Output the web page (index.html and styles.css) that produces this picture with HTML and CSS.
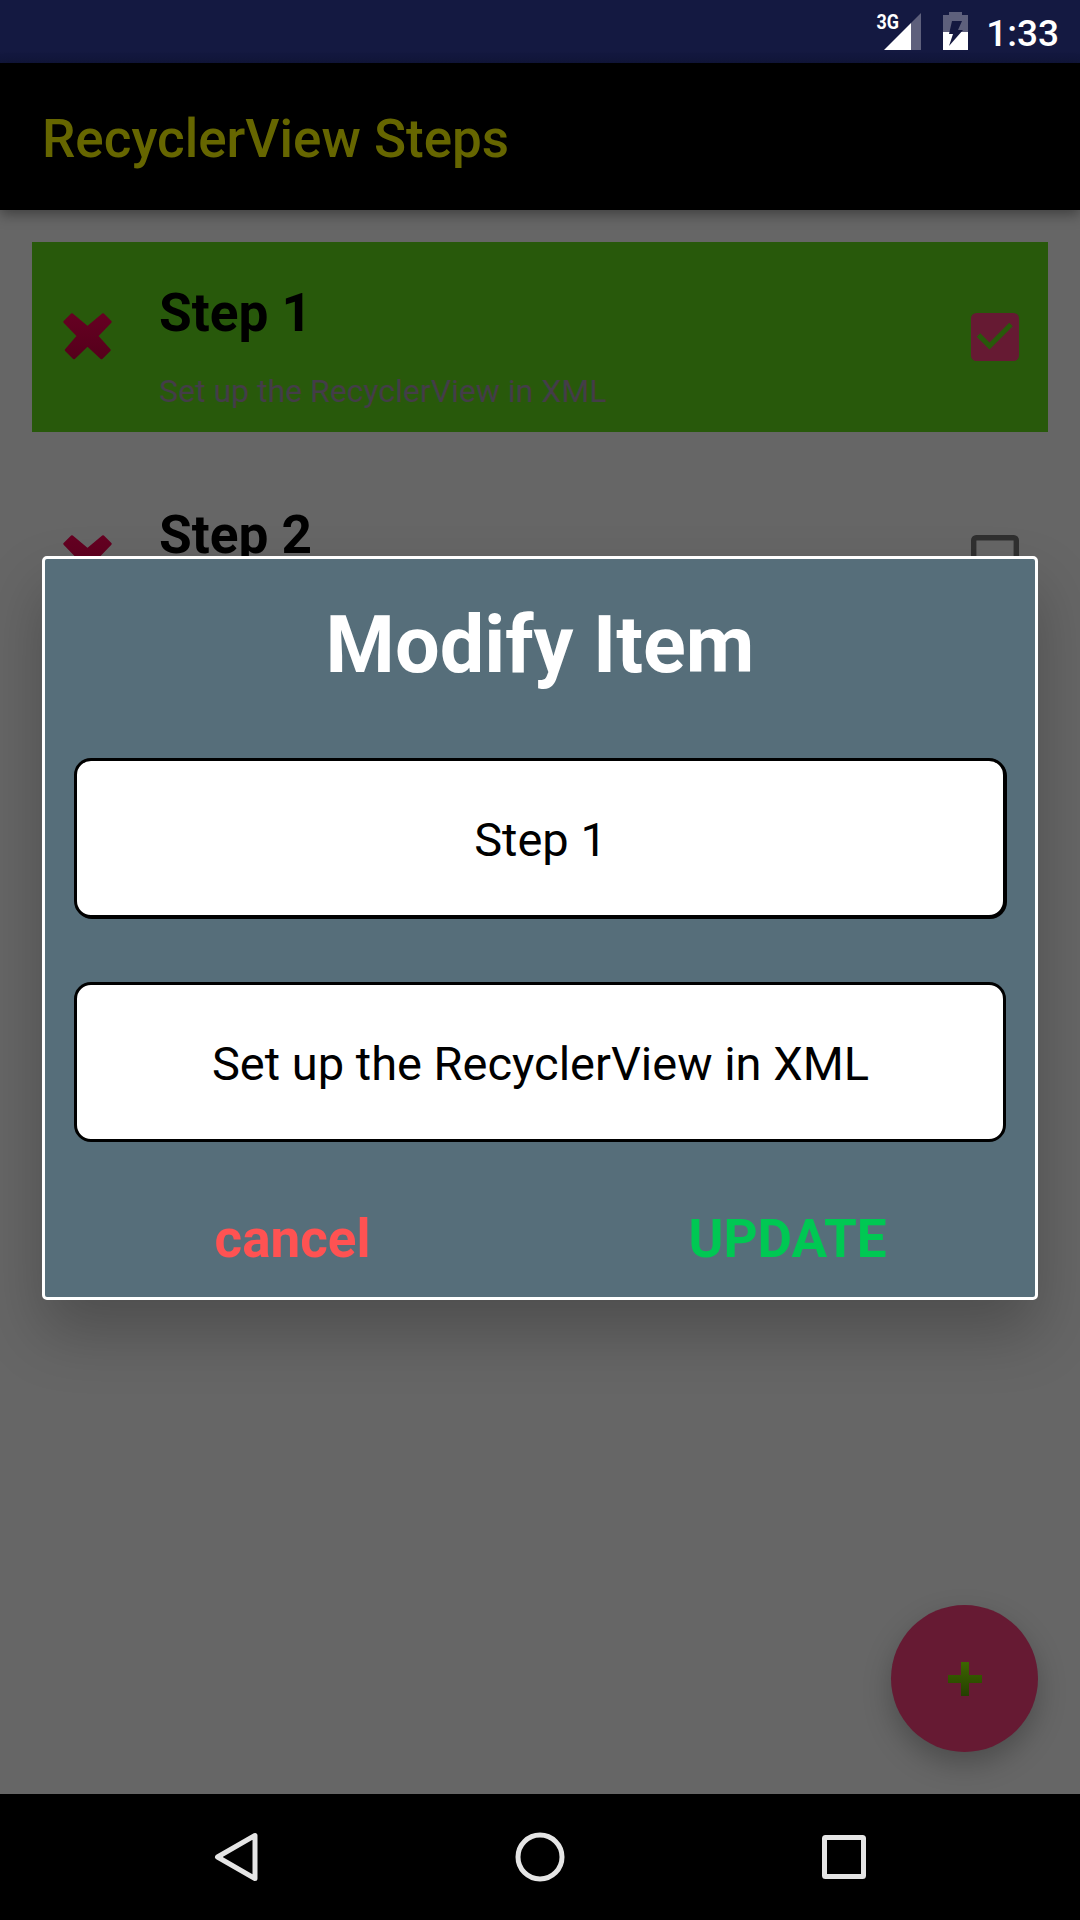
FILE: index.html
```html
<!DOCTYPE html>
<html lang="en">
<head>
<meta charset="utf-8">
<title>RecyclerView Steps</title>
<link rel="stylesheet" href="styles.css">
</head>
<body>
<div class="screen">
  <header class="status-bar">
    <svg class="signal" width="48" height="40" viewBox="0 0 48 40">
      <path d="M45 0V37H35V10Z" fill="#5e607c"/>
      <path d="M35 10V37H8Z" fill="#fff"/>
      <text class="network" x="0.500" y="16" textLength="22.500" lengthAdjust="spacingAndGlyphs">3G</text>
    </svg>
    <svg class="battery" width="25" height="38" viewBox="0 0 25 38">
      <path d="M6 0H19V3H25V20H0V3H6Z" fill="#5e607c"/>
      <path d="M0 20H25V38H0Z" fill="#fff"/>
      <path d="M9 9H19L15 18H20L6 34L10 22H6Z" fill="#141840"/>
    </svg>
    <span class="clock">1:33</span>
  </header>
  <div class="app-bar"><h1 class="app-title">RecyclerView Steps</h1></div>
  <main class="content">
    <section class="item item-done">
      <svg class="remove" width="56" height="56" viewBox="0 0 56 56">
        <defs><linearGradient id="red" x1="0" y1="0" x2="0" y2="1"><stop offset="0" stop-color="#660022"/><stop offset="1" stop-color="#55001b"/></linearGradient></defs>
        <path d="M12 6.500L27.500 19.500L43 6.500L50.500 14L37 28L49.500 42L41.500 50L27.500 37L14 50L6 42L18 28L4.500 14Z" fill="url(#red)" stroke="url(#red)" stroke-width="2.500" stroke-linejoin="round"/>
      </svg>
      <div class="item-text">
        <h2 class="item-title">Step 1</h2>
        <p class="item-detail">Set up the RecyclerView in XML</p>
      </div>
      <svg class="check" width="48" height="48" viewBox="0 0 48 48">
        <rect width="48" height="48" rx="5.500" fill="#661a33"/>
        <path d="M7.500 22L18.500 33L40 11.500" fill="none" stroke="#28590b" stroke-width="5"/>
      </svg>
    </section>
    <section class="item">
      <svg class="remove" width="56" height="56" viewBox="0 0 56 56">
        <path d="M12 6.500L27.500 19.500L43 6.500L50.500 14L37 28L49.500 42L41.500 50L27.500 37L14 50L6 42L18 28L4.500 14Z" fill="url(#red)" stroke="url(#red)" stroke-width="2.500" stroke-linejoin="round"/>
      </svg>
      <div class="item-text"><h2 class="item-title">Step 2</h2></div>
      <svg class="check" width="48" height="48" viewBox="0 0 48 48">
        <rect x="2.700" y="2.700" width="42.600" height="42.600" rx="2.500" fill="none" stroke="#303030" stroke-width="5.400"/>
      </svg>
    </section>
  </main>
  <nav class="nav-bar">
    <svg width="60" height="60" viewBox="0 0 60 60"><path d="M49 8.500V51.500L11.500 30Z"/></svg>
    <svg width="60" height="60" viewBox="0 0 60 60"><circle cx="30" cy="30" r="22"/></svg>
    <svg width="60" height="60" viewBox="0 0 60 60"><rect x="10.500" y="10.500" width="39" height="39" rx="1"/></svg>
  </nav>
  <div class="fab">
    <svg width="36" height="36" viewBox="0 0 36 36">
      <defs><linearGradient id="green" x1="0" y1="0" x2="0" y2="1"><stop offset="0" stop-color="#3d6600"/><stop offset="1" stop-color="#253f00"/></linearGradient></defs>
      <path d="M14 1H22V14H35V22H22V35H14V22H1V14H14Z" fill="url(#green)"/>
    </svg>
  </div>
  <div class="dialog">
    <h2 class="dialog-title">Modify Item</h2>
    <div class="field field-focused">Step 1</div>
    <div class="field">Set up the RecyclerView in XML</div>
    <div class="actions">
      <span class="cancel">cancel</span>
      <span class="update">UPDATE</span>
    </div>
  </div>
</div>
</body>
</html>
```

FILE: styles.css
```css
* { box-sizing: border-box; }
body { margin: 0; font-family: Roboto, sans-serif; }
h1, h2, p { margin: 0; }
svg { display: block; flex: none; }
.screen {
  position: relative;
  display: flex;
  flex-direction: column;
  width: 1080px;
  height: 1920px;
  overflow: hidden;
  background: #666;
}
.status-bar {
  display: flex;
  align-items: flex-start;
  height: 63px;
  padding: 12px 21px 0 0;
  justify-content: flex-end;
  background: linear-gradient(#141941 80%, #11163a);
}
.signal { margin-top: 1px; overflow: visible; }
.network { font: 700 21px Roboto, sans-serif; fill: #fff; }
.battery { margin: 0 18px 0 19px; }
.clock { font-size: 37px; font-weight: 500; line-height: 43px; color: #fff; }
.app-bar {
  position: relative;
  display: flex;
  align-items: center;
  height: 147px;
  padding: 4px 42px 0;
  background: #000;
  box-shadow: 0 5px 12px rgba(0, 0, 0, .35);
}
.app-title { font-size: 53px; font-weight: 500; color: #660; }
.content { flex: 1; padding: 32px; }
.item { display: flex; height: 190px; margin-bottom: 32px; padding: 0 29px 0 28px; }
.item-done { background: #28590b; }
.remove { margin-top: 66px; }
.item-text { flex: 1; padding: 40px 0 0 43px; }
.item-title { font-size: 53.2px; line-height: 62px; font-weight: 700; color: #000; }
.item-detail { margin-top: 28px; font-size: 32px; line-height: 38px; color: #443d48; }
.check { margin-top: 71px; }
.nav-bar {
  display: flex;
  align-items: center;
  justify-content: space-between;
  height: 126px;
  padding: 0 206px;
  background: #000;
}
.nav-bar svg { fill: none; stroke: #e5e5e5; stroke-width: 5; stroke-linejoin: round; }
.fab {
  position: absolute;
  left: 891px;
  top: 1605px;
  display: flex;
  align-items: center;
  justify-content: center;
  width: 147px;
  height: 147px;
  border-radius: 50%;
  background: #661a33;
  box-shadow: 0 12px 28px rgba(0, 0, 0, .25);
}
.dialog {
  position: absolute;
  left: 42px;
  top: 556px;
  display: flex;
  flex-direction: column;
  width: 996px;
  height: 744px;
  padding: 0 29px;
  border: 3px solid #fff;
  border-radius: 5px;
  background: #566e7a;
  box-shadow: 0 32px 62px rgba(0, 0, 0, .24);
}
.dialog-title {
  margin: 38px 0 65px;
  font-size: 79.2px;
  line-height: 96px;
  text-align: center;
  color: #fff;
}
.field {
  display: flex;
  align-items: center;
  justify-content: center;
  height: 160px;
  margin-bottom: 64px;
  padding: 2px 0 0 1px;
  border: 3px solid #000;
  border-radius: 17px;
  background: #fff;
  font-size: 47px;
}
.field-focused { box-shadow: 1px 1px 0 #000; }
.actions {
  display: grid;
  grid-template-columns: 1fr 1fr;
  margin: 2px -29px 0;
  font-size: 53px;
  font-weight: 700;
  line-height: 62px;
  text-align: center;
}
.cancel { color: #ff5252; }
.update { color: #00c853; }
```
